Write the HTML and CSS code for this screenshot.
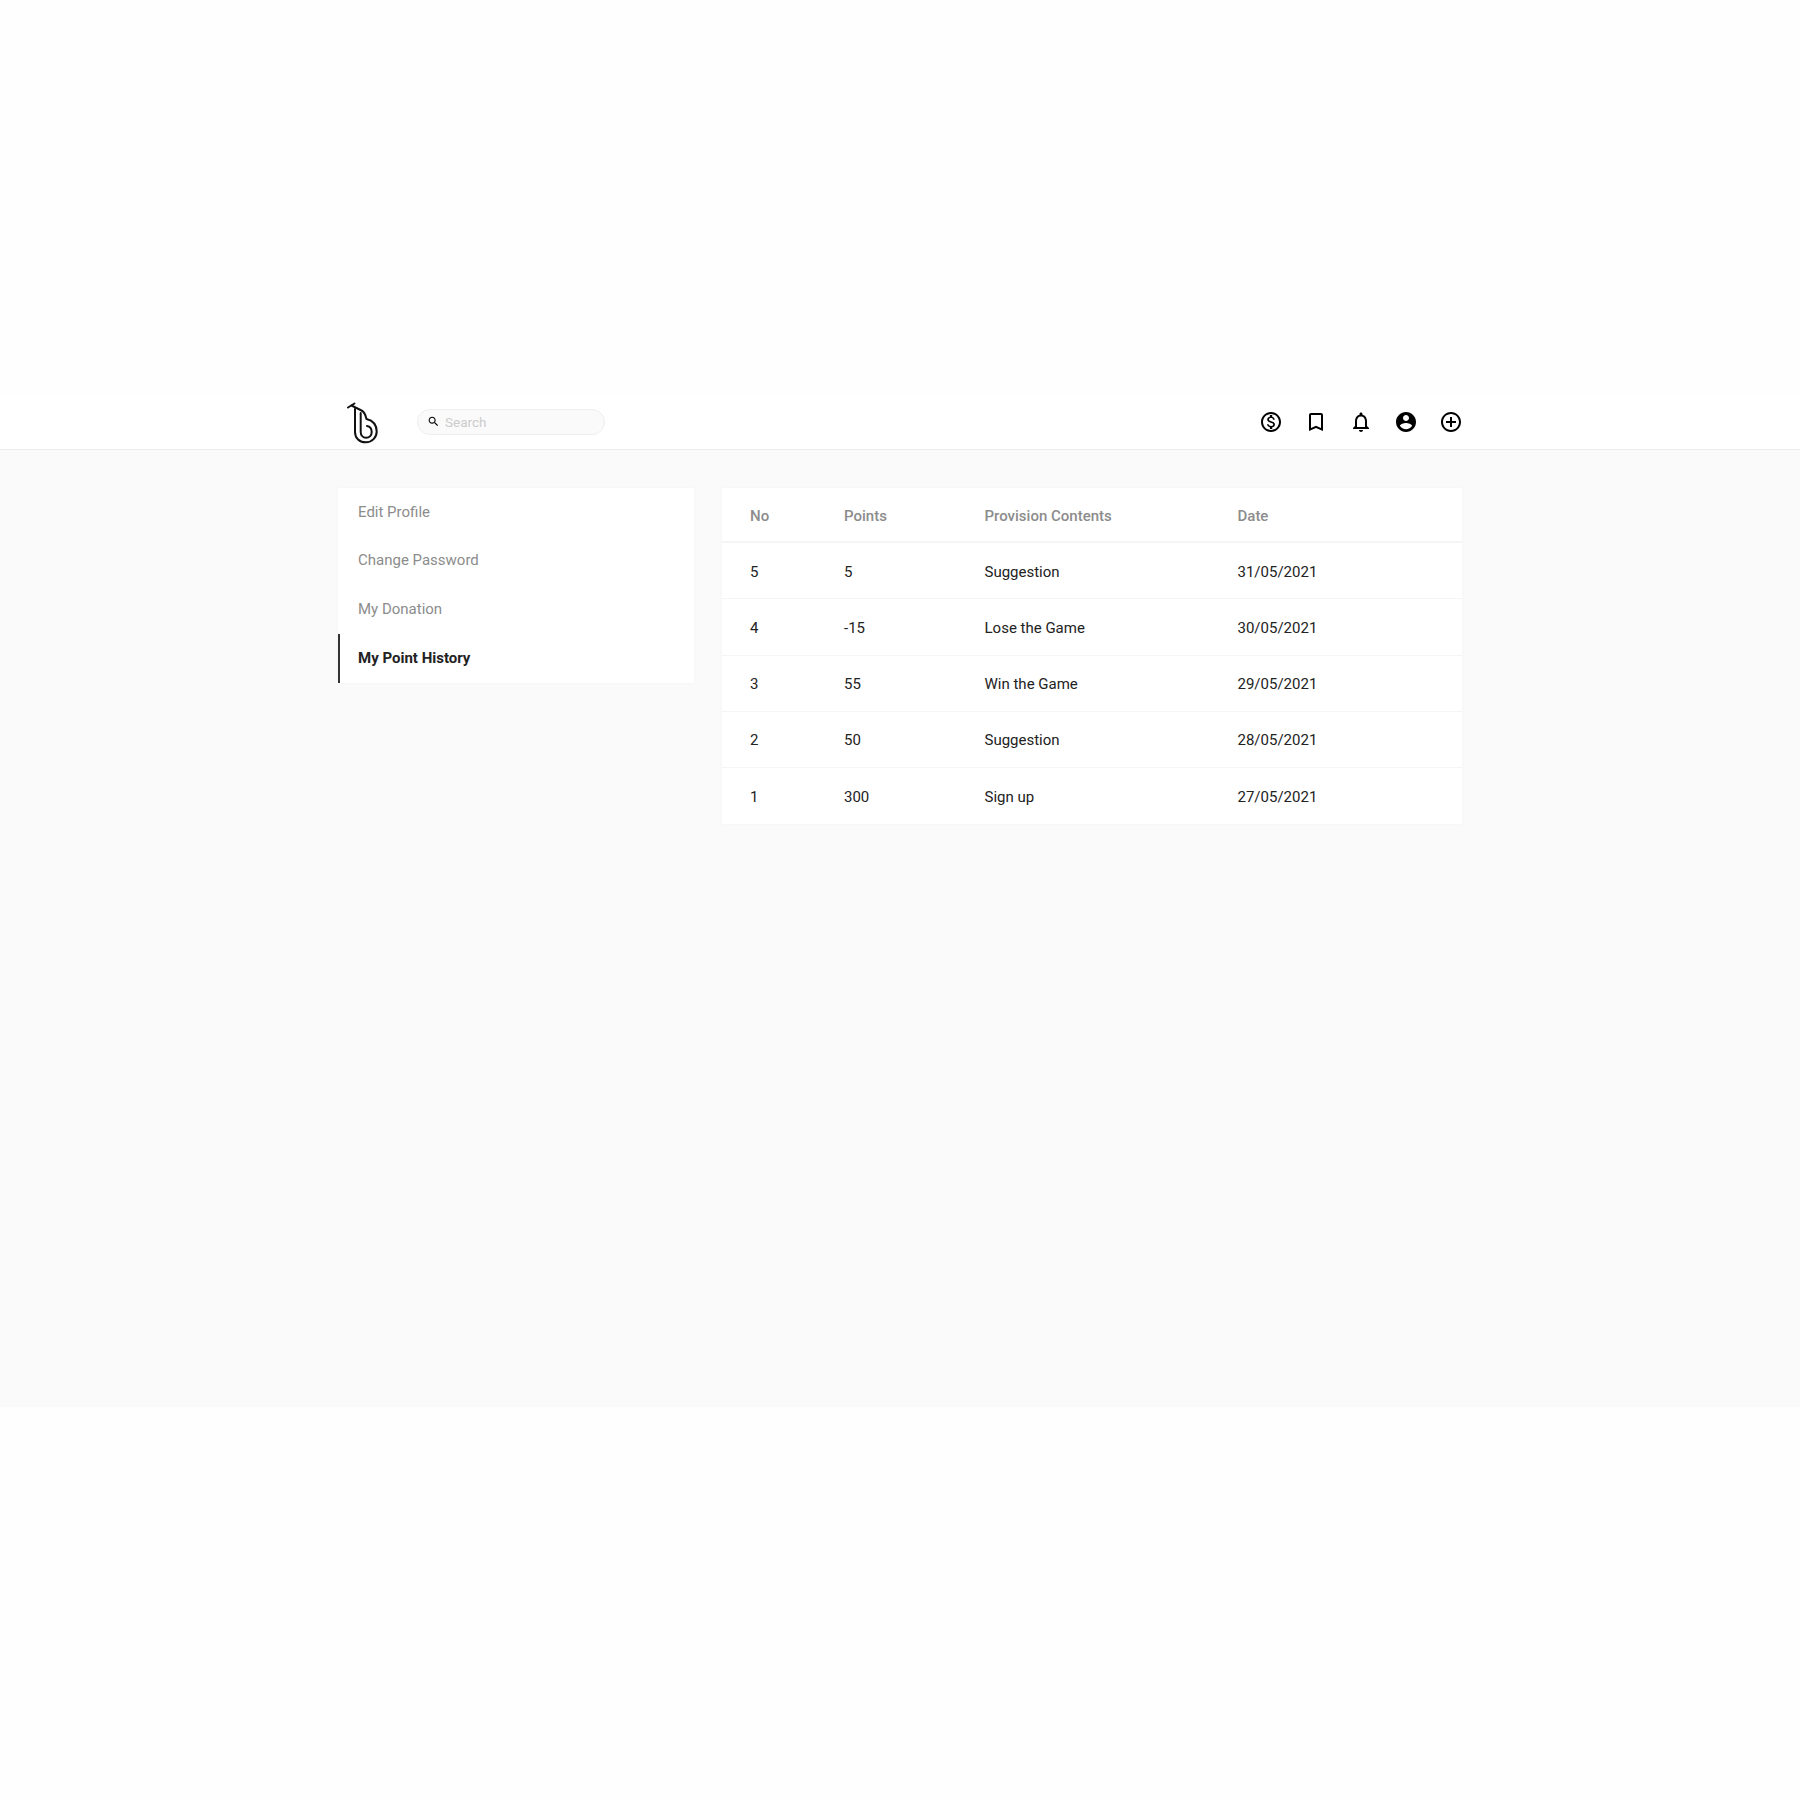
FILE: index.html
```html
<!DOCTYPE html>
<html lang="en">
<head>
    <meta charset="UTF-8">
    <title>My Point History</title>
    <link rel="stylesheet" href="styles.css">
</head>
<body>
    <div class="page">
        <header class="topbar">
            <div class="topbar-inner">
                <svg class="logo" viewBox="0 0 50 52" fill="none" stroke="#111" stroke-width="2" stroke-linecap="round" stroke-linejoin="round">
                    <path d="M8 11.5 L14.5 7.5"/>
                    <path d="M11.5 9.5 L21.5 14.5 C24.5 16 25.5 18.5 26.5 23 C32.5 24.5 36.7 29 36.7 35.5 C36.7 41.5 32 46.3 26 46.3 C19.5 46.3 15 42 15 36 V13"/>
                    <path d="M20.7 17 V36 C20.7 39.5 23 41.7 26 41.7 C29.5 41.7 31.7 39 31.7 36 C31.7 33 30 30.5 27 30"/>
                </svg>
                <div class="search">
                    <svg class="search-icon" viewBox="0 0 24 24"><path d="M15.5 14h-.79l-.28-.27C15.41 12.59 16 11.11 16 9.5 16 5.91 13.09 3 9.5 3S3 5.91 3 9.5 5.91 16 9.5 16c1.61 0 3.09-.59 4.23-1.57l.27.28v.79l5 4.99L20.49 19l-4.99-5zm-6 0C7.01 14 5 11.99 5 9.5S7.01 5 9.5 5 14 7.01 14 9.5 11.99 14 9.5 14z"/></svg>
                    <span>Search</span>
                </div>
                <nav class="topbar-icons">
                    <svg viewBox="0 0 24 24"><path d="M12 2C6.48 2 2 6.48 2 12s4.48 10 10 10 10-4.48 10-10S17.52 2 12 2zm0 18c-4.41 0-8-3.59-8-8s3.59-8 8-8 8 3.59 8 8-3.59 8-8 8zm.31-8.86c-1.77-.45-2.34-.94-2.34-1.67 0-.84.79-1.43 2.1-1.43 1.38 0 1.9.66 1.94 1.64h1.71c-.05-1.34-.87-2.57-2.49-2.97V5H10.9v1.69c-1.51.32-2.72 1.3-2.72 2.81 0 1.79 1.49 2.69 3.66 3.21 1.95.46 2.34 1.15 2.34 1.87 0 .53-.39 1.39-2.1 1.39-1.6 0-2.23-.72-2.32-1.64H8.04c.1 1.7 1.36 2.66 2.86 2.97V19h2.34v-1.67c1.52-.29 2.72-1.16 2.73-2.77-.01-2.2-1.9-2.96-3.66-3.42z"/></svg>
                    <svg viewBox="0 0 24 24"><path d="M17 3H7c-1.1 0-2 .9-2 2v16l7-3 7 3V5c0-1.1-.9-2-2-2zm0 15l-5-2.18L7 18V5h10v13z"/></svg>
                    <svg viewBox="0 0 24 24"><path d="M12 22c1.1 0 2-.9 2-2h-4c0 1.1.9 2 2 2zm6-6v-5c0-3.07-1.63-5.64-4.5-6.32V4c0-.83-.67-1.5-1.5-1.5s-1.5.67-1.5 1.5v.68C7.64 5.36 6 7.92 6 11v5l-2 2v1h16v-1l-2-2zm-2 1H8v-6c0-2.48 1.51-4.5 4-4.5s4 2.02 4 4.5v6z"/></svg>
                    <svg viewBox="0 0 24 24"><path d="M12 2C6.48 2 2 6.48 2 12s4.48 10 10 10 10-4.48 10-10S17.52 2 12 2zm0 3c1.66 0 3 1.34 3 3s-1.34 3-3 3-3-1.34-3-3 1.34-3 3-3zm0 14.2c-2.5 0-4.71-1.28-6-3.22.03-1.99 4-3.08 6-3.08 1.99 0 5.97 1.09 6 3.08-1.29 1.94-3.5 3.22-6 3.22z"/></svg>
                    <svg viewBox="0 0 24 24"><path d="M13 7h-2v4H7v2h4v4h2v-4h4v-2h-4V7zm-1-5C6.48 2 2 6.48 2 12s4.48 10 10 10 10-4.48 10-10S17.52 2 12 2zm0 18c-4.41 0-8-3.59-8-8s3.59-8 8-8 8 3.59 8 8-3.59 8-8 8z"/></svg>
                </nav>
            </div>
        </header>

        <main class="content">
            <aside class="side-menu">
                <a class="side-link">Edit Profile</a>
                <a class="side-link">Change Password</a>
                <a class="side-link">My Donation</a>
                <a class="side-link active">My Point History</a>
            </aside>

            <section class="history">
                <div class="history-row history-head">
                    <span>No</span><span>Points</span><span>Provision Contents</span><span>Date</span>
                </div>
                <div class="history-row">
                    <span>5</span><span>5</span><span>Suggestion</span><span>31/05/2021</span>
                </div>
                <div class="history-row">
                    <span>4</span><span>-15</span><span>Lose the Game</span><span>30/05/2021</span>
                </div>
                <div class="history-row">
                    <span>3</span><span>55</span><span>Win the Game</span><span>29/05/2021</span>
                </div>
                <div class="history-row">
                    <span>2</span><span>50</span><span>Suggestion</span><span>28/05/2021</span>
                </div>
                <div class="history-row">
                    <span>1</span><span>300</span><span>Sign up</span><span>27/05/2021</span>
                </div>
            </section>
        </main>
    </div>
</body>
</html>
```

FILE: styles.css
```css
* {
    margin: 0;
    padding: 0;
    box-sizing: border-box;
}

body {
    font-family: Roboto, sans-serif;
    background: #fefefe;
    color: #222;
    min-height: 1800px;
}

.page {
    padding-top: 395px;
}

.topbar {
    height: 55px;
    background: #fff;
    border-bottom: 1px solid #ececec;
}

.topbar-inner {
    width: 1124px;
    height: 54px;
    margin: 0 auto;
    display: flex;
    align-items: center;
}

.logo {
    width: 50px;
    height: 52px;
    margin: 0 27px 0 2px;
}

.search {
    width: 188px;
    height: 26px;
    padding: 0 0 1px 9px;
    display: flex;
    align-items: center;
    gap: 5px;
    background: #fafafa;
    border: 1px solid #eeeeee;
    border-radius: 13px;
    font-size: 13.5px;
    color: #cccccc;
}

.search-icon {
    width: 13px;
    height: 13px;
}

.topbar-icons {
    margin-left: auto;
    margin-right: -1px;
    display: flex;
    gap: 21px;
}

.topbar-icons svg {
    width: 24px;
    height: 24px;
    display: block;
}

.content {
    height: 957px;
    padding-top: 38px;
    background: #fafafa;
    display: flex;
    justify-content: center;
    align-items: flex-start;
    gap: 28px;
}

.side-menu {
    width: 356px;
    background: #fff;
    box-shadow: 0 0 3px rgba(0, 0, 0, 0.03);
    display: flex;
    flex-direction: column;
}

.side-link {
    height: 48.75px;
    padding: 0 0 1.5px 20px;
    display: flex;
    align-items: center;
    font-size: 15px;
    color: #8c8c8c;
}

.side-link.active {
    padding: 0 0 2px 18px;
    border-left: 2px solid #333;
    font-weight: 700;
    color: #222;
}

.history {
    width: 740px;
    background: #fff;
    box-shadow: 0 0 3px rgba(0, 0, 0, 0.03);
}

.history-row {
    height: 56.25px;
    padding: 2px 0 0 28px;
    display: grid;
    grid-template-columns: 94px 140.5px 253px 1fr;
    align-items: center;
    font-size: 15px;
    border-bottom: 1px solid #f5f5f5;
}

.history-row:last-child {
    padding-top: 1px;
    border-bottom: none;
}

.history-head {
    height: 55px;
    font-weight: 500;
    color: #8c8c8c;
    border-bottom: 2px solid #f5f5f5;
}
```
